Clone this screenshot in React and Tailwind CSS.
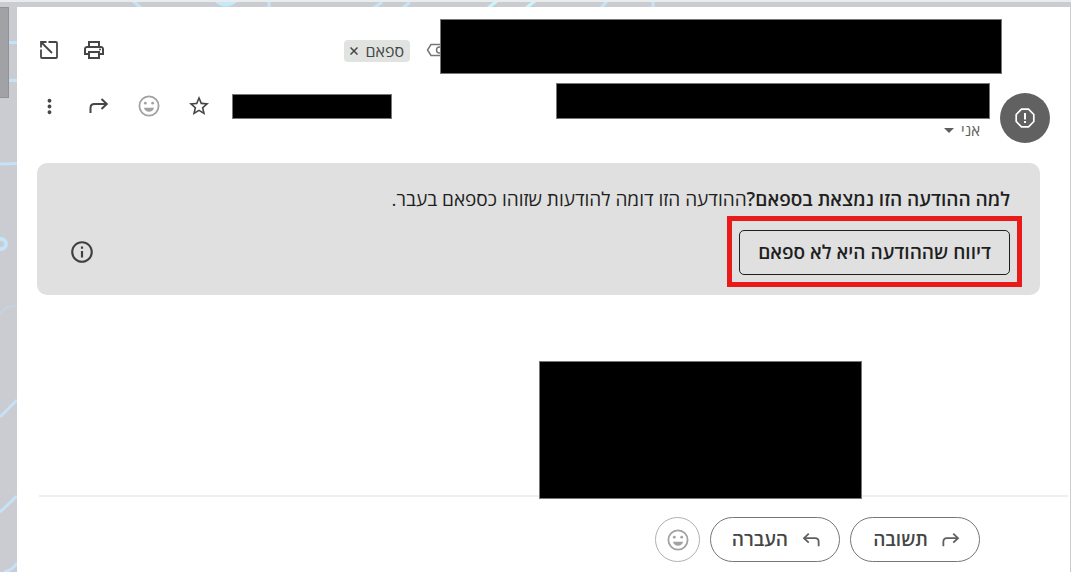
import { MdOutlinePrint, MdStarBorder, MdInfoOutline, MdMoreVert, MdArrowDropDown } from 'react-icons/md'

function TurnArrow({ className = '' }) {
  return (
    <svg viewBox="0 0 20 16" fill="none" stroke="currentColor" strokeWidth="2" className={className}>
      <path d="M1.500 15V10Q1.500 6 5.500 6H17.500" />
      <path d="M12.500 1L17.800 6L12.500 11" />
    </svg>
  )
}

function Smiley({ className = '' }) {
  return (
    <svg viewBox="0 0 22 22" className={className}>
      <circle cx="11" cy="11" r="9.600" fill="none" stroke="currentColor" strokeWidth="1.800" />
      <circle cx="7.300" cy="8.200" r="1.400" fill="currentColor" />
      <circle cx="14.700" cy="8.200" r="1.400" fill="currentColor" />
      <path d="M5.800 12.700H16.200Q14.800 16.700 11 16.700T5.800 12.700Z" fill="currentColor" />
    </svg>
  )
}

function OpenWindow({ className = '' }) {
  return (
    <svg viewBox="0 0 20 20" fill="none" stroke="currentColor" strokeWidth="1.800" className={className}>
      <path d="M9.500 2H17Q18 2 18 3V17Q18 18 17 18H3Q2 18 2 17V9.500" />
      <path d="M2 7.500V2H7.500M2 2L13 13" />
    </svg>
  )
}

function LabelTag({ className = '' }) {
  return (
    <svg viewBox="0 0 22 14" fill="none" stroke="currentColor" strokeWidth="1.500" className={className}>
      <path d="M5 1.500H19Q20 1.500 20 3V11Q20 12.500 19 12.500H5L1.500 7Z" />
      <circle cx="13.500" cy="7" r="3" />
    </svg>
  )
}

function SpamSign({ className = '' }) {
  return (
    <svg viewBox="0 0 20 20" fill="none" stroke="currentColor" strokeWidth="1.700" className={className}>
      <path d="M6.500 1.200H13.500L18.800 6.500V13.500L13.500 18.800H6.500L1.200 13.500V6.500Z" />
      <path d="M10 5V11.500M10 13V15" strokeWidth="2" />
    </svg>
  )
}

function Backdrop() {
  return (
    <>
      <svg className="absolute left-0 top-0 h-[572px] w-[17px]" fill="none" stroke="#c5e2f8" strokeWidth="3" aria-hidden="true">
        <path d="M0 42.500H17M0 80.500H17M0 164L17 163.500" />
        <circle cx="1" cy="244" r="5" stroke="#c3e5fb" strokeWidth="4" />
        <path d="M0 314Q6 305 17 306" stroke="#c5d3e0" strokeWidth="2" />
        <path d="M0 417L17 400M0 512L17 496M4 572Q13 570 17 563" />
      </svg>
      <svg className="absolute left-0 top-0 h-[7px] w-[700px]" fill="none" stroke="#c4e5f6" strokeWidth="3" aria-hidden="true">
        <path d="M133 1L141 8M269 2V7M382 2L374 8M410 2L403 8M607 1L601 8M653 2V7" />
        <path d="M497 1L488 8M535 1L526 8" stroke="#c4f8f9" />
        <path d="M215 2Q226 11 237 2Z" fill="#c4eafa" stroke="none" />
      </svg>
    </>
  )
}

function IconButton({ label, className = '', children }) {
  return (
    <button type="button" aria-label={label} className={`flex size-[30px] items-center justify-center ${className}`}>
      {children}
    </button>
  )
}

function ActionButton({ icon, children }) {
  return (
    <button
      type="button"
      className="flex h-[45px] w-[130px] items-center gap-[14px] rounded-full border border-[#747775] ps-[19px] text-[19px] font-semibold text-[#444746]"
    >
      {icon}
      {children}
    </button>
  )
}

export default function App() {
  return (
    <div
      dir="rtl"
      className="relative min-h-screen bg-[#cbccd1] pl-[17px] pr-px pt-[7px] font-['Open_Sans','Noto_Sans',sans-serif] text-[#1f1f1f]"
    >
      <Backdrop />
      <div className="absolute inset-x-0 top-0 h-[2px] bg-[#e9eced]" />
      <div className="absolute left-0 top-[7px] h-[91px] w-[9px] border border-l-0 border-[#929296] bg-[#a1a2a6]" />

      <main className="relative flex min-h-[calc(100vh-7px)] flex-col bg-white pt-3">
        <header className="flex h-[55px] items-center pl-[17px] pr-[68px]">
          <div className="relative z-10 h-full w-[562px] border border-[#777] bg-black" />
          <LabelTag className="-ms-2 mt-[6px] h-[14px] w-[22px] shrink-0 text-[#747775]" />
          <div className="ms-4 mt-2 flex h-[22px] shrink-0 items-center gap-2 rounded bg-[#e1e3e1] px-[6px] text-base leading-[22px] text-[#444746]">
            <span>ספאם</span>
            <button type="button" aria-label="הסרת התווית">
              <svg viewBox="0 0 8 8" className="size-2" fill="none" stroke="currentColor" strokeWidth="1.500">
                <path d="M0.500 0.500L7.500 7.500M7.500 0.500L0.500 7.500" />
              </svg>
            </button>
          </div>
          <div className="ms-auto mt-[7px] flex gap-[15px] text-[#444746]">
            <IconButton label="הדפסה">
              <MdOutlinePrint className="size-6" />
            </IconButton>
            <IconButton label="פתיחה בחלון חדש">
              <OpenWindow className="size-5" />
            </IconButton>
          </div>
        </header>

        <section className="mt-[9px] flex items-start pl-[17px] pr-5">
          <div className="mt-[10px] flex size-[50px] shrink-0 items-center justify-center rounded-full bg-[#616161] text-white">
            <SpamSign className="size-5" />
          </div>
          <div className="ms-[10px]">
            <div className="h-9 w-[434px] border border-[#777] bg-black" />
            <button type="button" className="ms-[10px] flex h-[22px] items-center text-[15px] text-[#5e5e5e]">
              אני
              <MdArrowDropDown className="size-6" />
            </button>
          </div>
          <div className="ms-auto flex items-center pt-2 text-[#444746]">
            <div className="h-[25px] w-[160px] border border-[#777] bg-black" />
            <div className="ms-[18px] flex gap-5">
              <IconButton label="סימון בכוכב">
                <MdStarBorder className="size-6" />
              </IconButton>
              <IconButton label="הוספת תגובת אמוג׳י" className="text-[#a1a2a2]">
                <Smiley className="size-[22px]" />
              </IconButton>
              <IconButton label="תשובה">
                <TurnArrow className="h-4 w-5" />
              </IconButton>
              <IconButton label="עוד">
                <MdMoreVert className="size-[23px]" />
              </IconButton>
            </div>
          </div>
        </section>

        <section className="ml-5 mr-[30px] mt-5 flex min-h-[132px] items-end justify-between rounded-[10px] bg-[#e0e0e0] pb-5 pl-[30px] pr-[30px] pt-[22px]">
          <div>
            <p className="text-[19px] leading-7">
              <strong className="font-semibold">למה ההודעה הזו נמצאת בספאם?</strong>ההודעה הזו דומה להודעות שזוהו כספאם בעבר.
            </p>
            <div className="relative mt-[17px] w-fit">
              <button type="button" className="h-[45px] rounded-[5px] border border-[#1f1f1f] px-[18px] text-[19px] font-semibold">
                דיווח שההודעה היא לא ספאם
              </button>
              <div className="pointer-events-none absolute -inset-x-3 -bottom-3 -top-[14px] border-[5px] border-[#e91a1a]" />
            </div>
          </div>
          <IconButton label="מידע נוסף" className="mb-2 text-[#3f3f3f]">
            <MdInfoOutline className="size-[26px]" />
          </IconButton>
        </section>

        <div className="ml-[22px] mr-[2px] mt-[66px] border-b-2 border-[#efefef] pr-[206px]">
          <div className="relative -mb-1 h-[138px] w-[323px] border border-[#777] bg-black" />
        </div>

        <footer className="mt-5 flex gap-[10px] pr-[90px]">
          <ActionButton icon={<TurnArrow className="h-4 w-[18px] text-[#5e605f]" />}>תשובה</ActionButton>
          <ActionButton icon={<TurnArrow className="h-4 w-[18px] -scale-x-100 text-[#5e605f]" />}>העברה</ActionButton>
          <button
            type="button"
            aria-label="הוספת תגובת אמוג׳י"
            className="flex size-[45px] items-center justify-center rounded-full border border-[#b0b1b1] text-[#a1a2a2]"
          >
            <Smiley className="size-[22px]" />
          </button>
        </footer>
      </main>
    </div>
  )
}
